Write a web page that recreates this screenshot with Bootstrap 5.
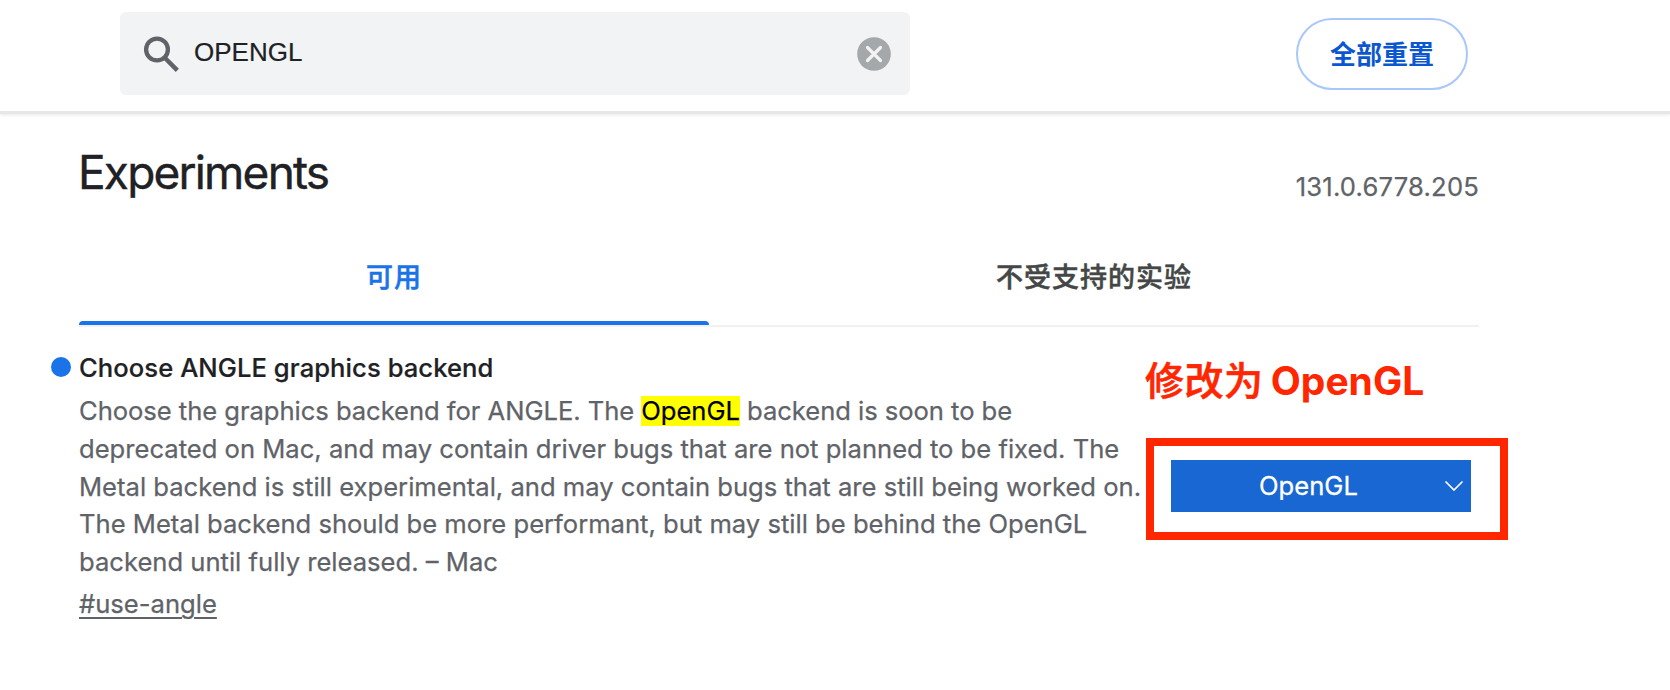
<!DOCTYPE html>
<html lang="zh-CN">
<head>
<meta charset="utf-8">
<meta name="viewport" content="width=device-width, initial-scale=1">
<title>Experiments</title>
<link href="https://cdn.jsdelivr.net/npm/bootstrap@5.3.0/dist/css/bootstrap.min.css" rel="stylesheet">
<style>
body{font-family:Inter,"Noto Sans CJK SC",sans-serif;color:#202124;font-size:25.6px;overflow:hidden}
.topbar{height:111px;box-shadow:0 3px 0 #e7e7e7,0 4px 3px #e8e8e8;padding:12px 0 0 120px}
.search-box{width:790px;height:83px;background:#f1f3f4;border-radius:6px;padding:0 19px 0 21px}
.search-text{font:26px/32px "Liberation Sans",sans-serif;margin-left:13px;padding-bottom:3px;-webkit-text-stroke:.2px}
.reset-btn{width:172px;height:72px;margin:6px 0 0 386px;border:2px solid #a8c7fa;color:#0b57d0;font-size:26px;font-weight:700;padding:0}
.heading-row{height:123px;margin:0 191px 0 79px}
.page-title{font-size:46px;font-weight:400;line-height:56px;margin:33px 0 0 -1px;letter-spacing:-1.8px;-webkit-text-stroke:.4px}
.version{color:#5f6368;line-height:32px;margin-top:60px;letter-spacing:.2px;-webkit-text-stroke:.25px}
.tab-row{height:93px;margin:0 191px 0 79px;border-bottom:2px solid #f1f1f1}
.tab-item{height:91px;padding:26px 0 0;color:#444746;font-size:27px;line-height:36px;font-weight:500;letter-spacing:1px;border:0;border-radius:0;-webkit-text-stroke:.5px}
.tab-item.active{width:630px;color:#1a73e8}
.tab-bar{height:4px;background:#1a73e8;border-radius:4px 4px 0 0}
.exp{padding-left:51px}
.exp-text{width:1095px;padding-top:22px}
.dot{width:20px;height:20px;border-radius:50%;background:#1a73e8;margin:-2px 8px 0 0}
.exp-title{font-size:25.6px;font-weight:500;line-height:38px;margin:0;letter-spacing:.06px;-webkit-text-stroke:.2px}
.desc{margin:5px 0 0 28px;color:#5f6368;line-height:37.8px;white-space:nowrap;-webkit-text-stroke:.25px}
.desc span{display:inline-block}
.desc span:first-child{letter-spacing:-.045px}
.desc mark{padding:0;background:#ff0;color:#000;line-height:30px;display:inline-block}
.perma{display:inline-block;margin:4px 0 0 28px;color:#5f6368;line-height:38px;text-underline-offset:4px;text-decoration-thickness:2px;-webkit-text-stroke:.25px}
.note{color:#ff2600;font-size:39px;font-weight:700;line-height:50px;margin:29px 0 32px -1px;word-spacing:-2px}
.note-cjk{font-weight:500;letter-spacing:.5px;-webkit-text-stroke:.6px}
.frame{width:362px;height:102px;border:8px solid #ff2600;padding:14px 0 0 17px}
.picker{width:300px;height:52px;background:#1967d2;color:#fff;padding:0 8px 0 88px;border:0;border-radius:0;font-size:25.6px;-webkit-text-stroke:.3px}
</style>
</head>
<body class="bg-white">
<header class="topbar d-flex align-items-start">
<div class="search-box d-flex align-items-center">
<svg width="40" height="40" viewBox="0 0 40 40" fill="none" stroke="#5f6368" stroke-width="4.300"><circle cx="16" cy="15.500" r="10.900"/><path d="M24.500 24.500 36.300 36.300" stroke-width="4.500"/></svg>
<span class="search-text flex-grow-1">OPENGL</span>
<svg width="34" height="34" viewBox="0 0 34 34"><circle cx="17" cy="17" r="16.800" fill="#a5a8aa"/><path d="M10.500 10.500 23.500 23.500M23.500 10.500 10.500 23.500" stroke="#f1f3f4" stroke-width="3.200" stroke-linecap="round"/></svg>
</div>
<button class="reset-btn btn rounded-pill" type="button">全部重置</button>
</header>
<main>
<div class="heading-row d-flex justify-content-between align-items-start">
<h1 class="page-title">Experiments</h1>
<div class="version">131.0.6778.205</div>
</div>
<nav class="tab-row nav flex-nowrap">
<a class="tab-item nav-link active text-center d-flex flex-column justify-content-between">可用<span class="tab-bar"></span></a>
<a class="tab-item nav-link flex-grow-1 text-center">不受支持的实验</a>
</nav>
<section class="exp d-flex align-items-start">
<div class="exp-text">
<div class="d-flex align-items-center"><span class="dot"></span><h2 class="exp-title">Choose ANGLE graphics backend</h2></div>
<p class="desc"><span>Choose the graphics backend for ANGLE. The <mark>OpenGL</mark> backend is soon to be</span><br><span>deprecated on Mac, and may contain driver bugs that are not planned to be fixed. The</span><br><span>Metal backend is still experimental, and may contain bugs that are still being worked on.</span><br><span>The Metal backend should be more performant, but may still be behind the OpenGL</span><br><span>backend until fully released. – Mac</span></p>
<a class="perma">#use-angle</a>
</div>
<div>
<div class="note"><span class="note-cjk">修改为</span> OpenGL</div>
<div class="frame"><button type="button" class="picker btn d-flex align-items-center justify-content-between"><span>OpenGL</span>
<svg width="18" height="10" viewBox="0 0 18 10" fill="none" stroke="#fff" stroke-width="1.700" stroke-linecap="round"><path d="M1 1 9 9 17 1"/></svg></button></div>
</div>
</section>
</main>
<script src="https://cdn.jsdelivr.net/npm/bootstrap@5.3.0/dist/js/bootstrap.bundle.min.js"></script>
</body>
</html>
